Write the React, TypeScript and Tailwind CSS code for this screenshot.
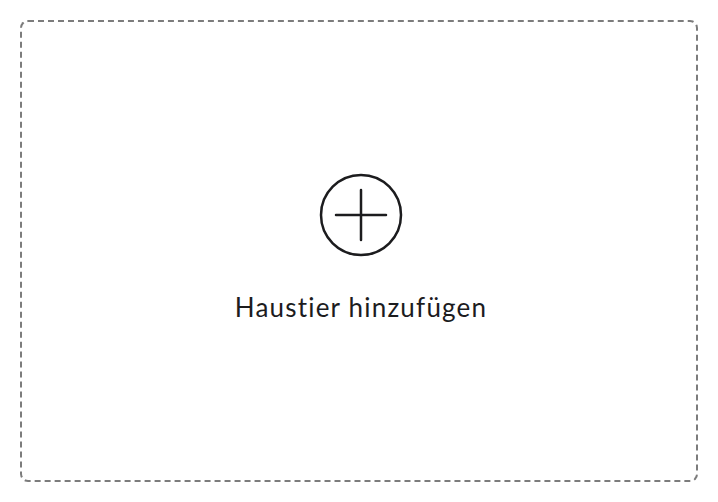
export default function App() {
  return (
    <div className="p-5 bg-white" style={{ fontFamily: 'Lato, "Noto Sans", sans-serif' }}>
      <button
        type="button"
        className="w-full h-[462px] flex flex-col items-center justify-center gap-[37px] pb-[10px] pl-[4px] rounded-lg border-2 border-dashed border-[#7c7c7c] bg-white"
      >
        <svg width="84" height="84" viewBox="0 0 84 84" fill="none" stroke="#1c1c1e" strokeWidth="2.5" strokeLinecap="round">
          <circle cx="42" cy="42" r="40" />
          <path d="M42 17v50M17 42h50" />
        </svg>
        <span className="text-[26px] leading-none tracking-[1.2px] [font-variant-ligatures:none] text-[#1c1c1e]">
          Haustier hinzufügen
        </span>
      </button>
    </div>
  );
}
